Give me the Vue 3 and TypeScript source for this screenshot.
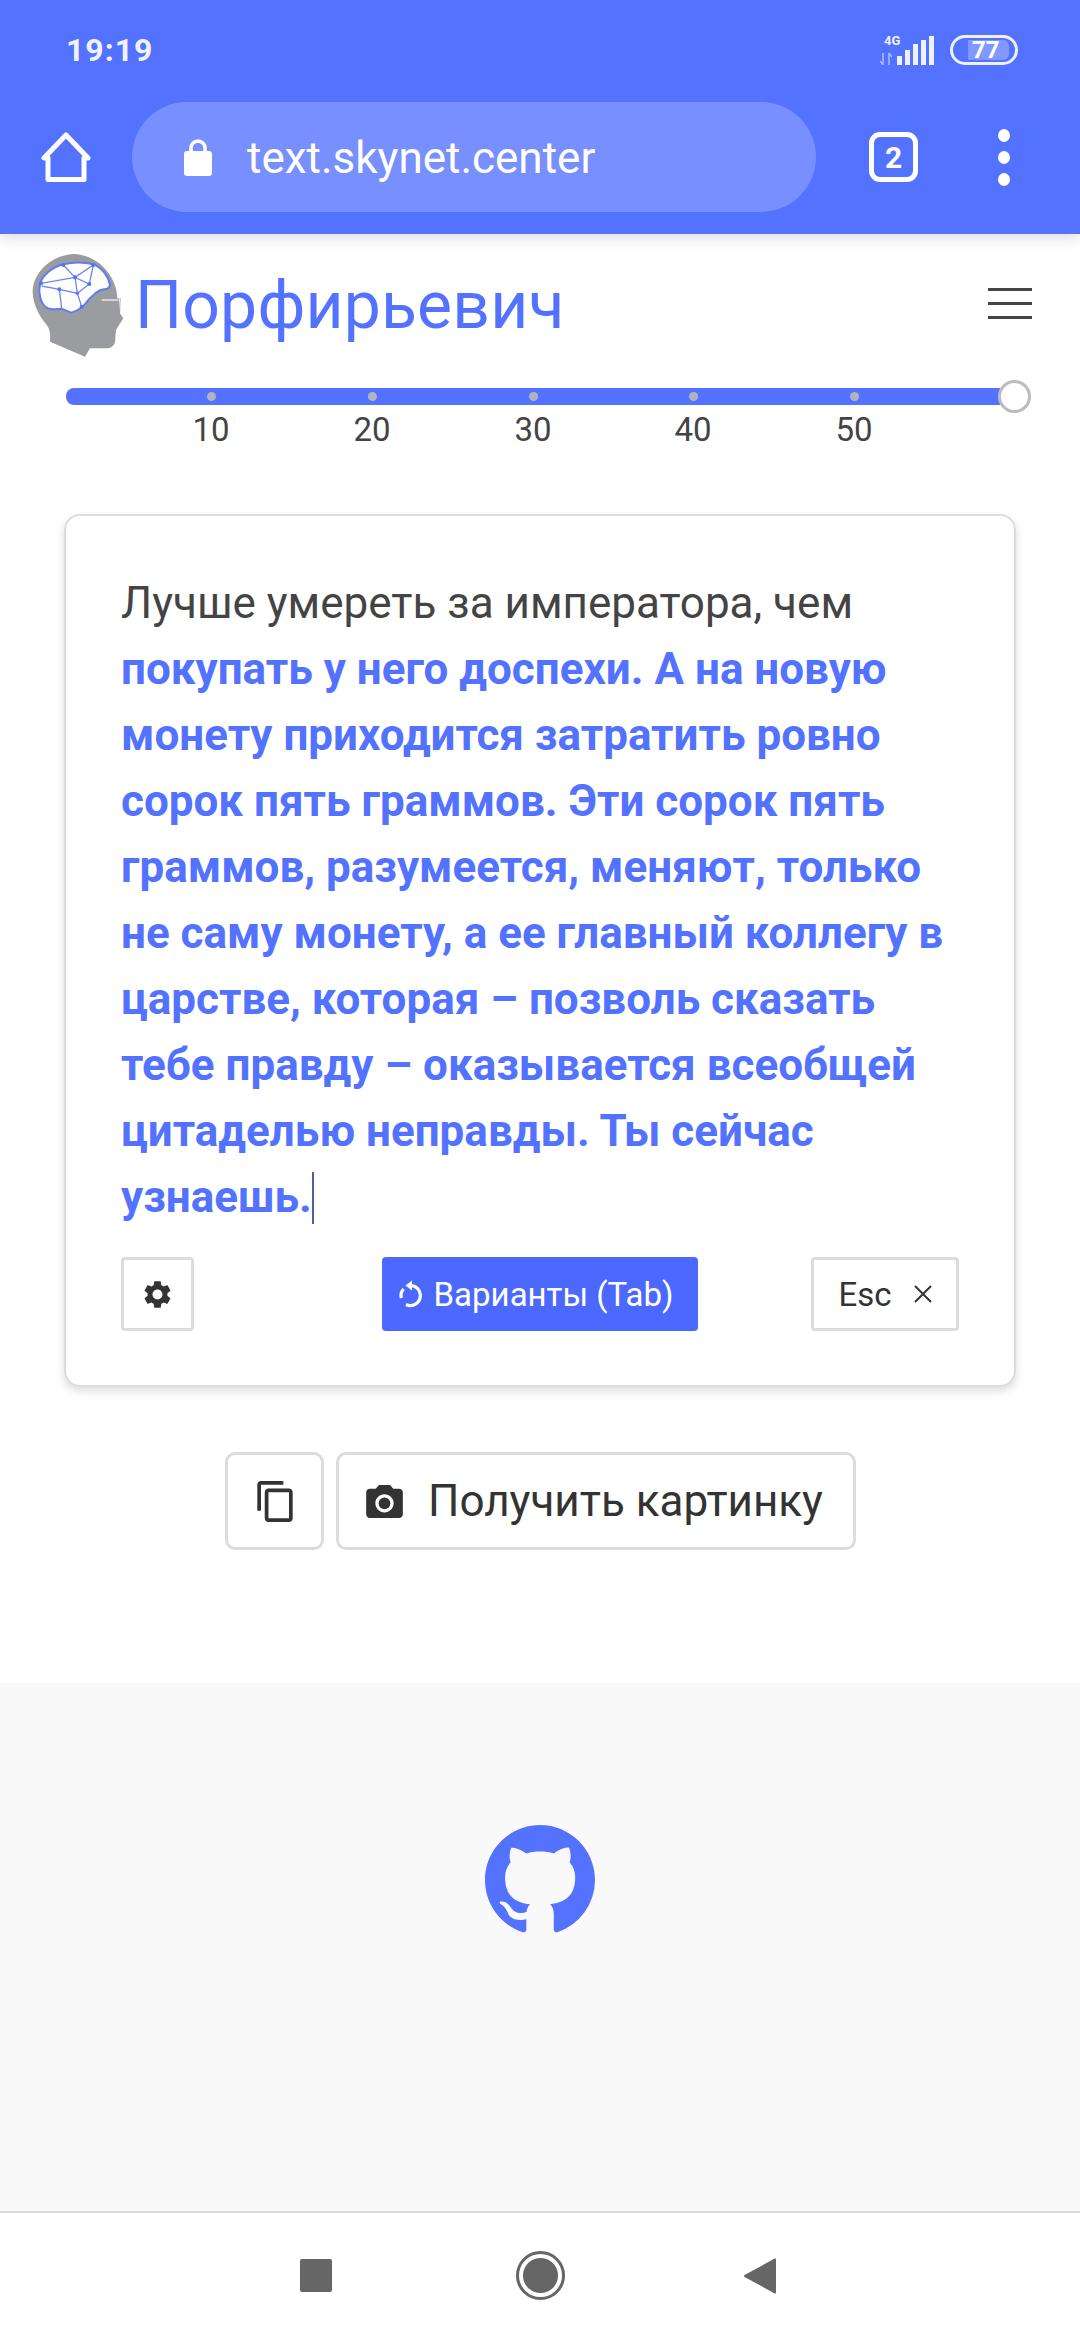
<script setup lang="ts">
const ticks: { value: number; left: number }[] = [
  { value: 10, left: 145 },
  { value: 20, left: 306 },
  { value: 30, left: 467 },
  { value: 40, left: 627 },
  { value: 50, left: 788 },
]
const bars: { h: number }[] = [{ h: 9 }, { h: 15 }, { h: 21 }, { h: 25 }, { h: 29 }]
function tickStyle(left: number) {
  return { left: left + 'px' }
}
function barStyle(h: number) {
  return { height: h + 'px' }
}
</script>

<template>
  <div class="page">
    <header class="chrome">
      <div class="status">
        <span class="time">19:19</span>
        <div class="indicators">
          <div class="net">
            <span class="net-type">4G</span>
            <svg class="arrows" viewBox="0 0 12 12" width="12" height="12">
              <path d="M3 0v12M3 12L0 8M9 12V0M9 0l3 4" stroke="#a9b9ff" stroke-width="1.6" fill="none" />
            </svg>
          </div>
          <div class="signal">
            <i v-for="(b, i) in bars" :key="i" :style="barStyle(b.h)"></i>
          </div>
          <div class="battery"><span class="battery-fill">77</span></div>
        </div>
      </div>
      <div class="toolbar">
        <svg class="home" viewBox="0 0 50 50" width="50" height="50">
          <path d="M25 3L3 26h4v21.500h36V26h4z" fill="none" stroke="#fff" stroke-width="5" stroke-linejoin="round" />
        </svg>
        <div class="url">
          <svg class="lock" viewBox="0 0 30 38" width="30" height="38">
            <path d="M8 15V10a7 7 0 0 1 14 0v5" fill="none" stroke="#fff" stroke-width="3.500" />
            <rect x="1" y="13" width="28" height="25" rx="3" fill="#fff" />
          </svg>
          <span class="url-text">text.skynet.center</span>
        </div>
        <div class="tabs">2</div>
        <div class="dots"><i></i><i></i><i></i></div>
      </div>
    </header>

    <main class="content">
      <div class="brand">
        <svg class="logo" viewBox="0 0 300 330" width="100" height="110">
          <path d="M135 12C65 14 10 65 8 125C8 160 28 200 48 222C60 238 62 250 60 275L165 320L180 295L235 295C250 292 257 280 256 265L258 240L280 205L270 190L272 145L262 145C262 90 215 18 135 12z" fill="#9b9c9f" />
          <path d="M30 100C40 75 65 52 100 43C130 36 165 37 190 43C215 52 235 78 240 105C238 115 230 118 222 118C205 118 190 135 175 150C165 165 150 180 125 188C110 186 100 175 92 176C75 178 60 182 48 172C32 160 24 130 30 100z" fill="#fff" stroke="#5f7cf0" stroke-width="6" stroke-linejoin="round" />
          <path d="M100 45L135 82L190 45L178 102L135 82L33 100M135 82L142 130L178 102M35 108L88 118L142 130L155 170M88 118L95 175" stroke="#6d88f0" stroke-width="4" fill="none" />
          <g fill="#5272ff">
            <circle cx="100" cy="45" r="6" />
            <circle cx="190" cy="45" r="6" />
            <circle cx="135" cy="82" r="6" />
            <circle cx="178" cy="102" r="6" />
            <circle cx="33" cy="100" r="6" />
            <circle cx="88" cy="118" r="6" />
            <circle cx="142" cy="130" r="5" />
            <circle cx="155" cy="170" r="6" />
          </g>
          <path d="M215 150H265M268 145L272 182" stroke="#e6e6e8" stroke-width="4" fill="none" />
        </svg>
        <h1 class="title">Порфирьевич</h1>
        <div class="burger"><i></i><i></i><i></i></div>
      </div>

      <div class="slider">
        <div class="rail">
          <i v-for="t in ticks" :key="'d' + t.value" class="dot" :style="tickStyle(t.left)"></i>
          <span class="thumb"></span>
        </div>
        <div class="labels">
          <span v-for="t in ticks" :key="t.value" class="label" :style="tickStyle(t.left)">{{ t.value }}</span>
        </div>
      </div>

      <section class="card">
        <p class="story">Лучше умереть за императора, чем <b>покупать у него доспехи. А на новую монету приходится затратить ровно сорок пять граммов. Эти сорок пять граммов, разумеется, меняют, только не саму монету, а ее главный коллегу в царстве, которая – позволь сказать тебе правду – оказывается всеобщей цитаделью неправды. Ты сейчас узнаешь.</b><span class="caret"></span></p>
        <div class="actions">
          <button class="btn gear">
            <svg viewBox="2 1.500 20 21" width="29" height="29">
              <path fill="#333" d="M19.140 12.940c.04-.3.06-.61.06-.94 0-.32-.02-.64-.07-.94l2.030-1.580a.49.49 0 0 0 .12-.61l-1.920-3.320a.488.488 0 0 0-.59-.22l-2.390.96c-.5-.38-1.030-.7-1.620-.94l-.36-2.540a.484.484 0 0 0-.48-.41h-3.840c-.24 0-.43.17-.47.41l-.36 2.540c-.59.24-1.130.57-1.620.94l-2.390-.96c-.22-.08-.47 0-.59.22L2.740 8.870c-.12.21-.08.47.12.61l2.030 1.580c-.05.3-.09.63-.09.94s.02.64.07.94l-2.030 1.580a.49.49 0 0 0-.12.61l1.920 3.320c.12.22.37.29.59.22l2.390-.96c.5.38 1.030.7 1.620.94l.36 2.540c.05.24.24.41.48.41h3.840c.24 0 .44-.17.47-.41l.36-2.540c.59-.24 1.130-.56 1.620-.94l2.390.96c.22.08.47 0 .59-.22l1.920-3.320c.12-.22.07-.47-.12-.61l-2.010-1.580zM12 15.600c-1.980 0-3.600-1.620-3.600-3.600s1.620-3.600 3.600-3.600 3.600 1.620 3.600 3.600-1.620 3.600-3.600 3.600z" />
            </svg>
          </button>
          <button class="btn variants">
            <svg viewBox="0 0 24 28" width="24" height="28">
              <path d="M11 5.500A10 10 0 1 1 7 24.500M2.300 18A10 10 0 0 1 4.500 9" fill="none" stroke="#fff" stroke-width="3.200" />
              <path d="M6.500 5.500L13 0.500V10.500z" fill="#fff" />
            </svg>
            <span>Варианты (Tab)</span>
          </button>
          <button class="btn esc">
            <span>Esc</span>
            <svg viewBox="0 0 18 18" width="18" height="18">
              <path d="M1 1l16 16M17 1L1 17" stroke="#333" stroke-width="2" />
            </svg>
          </button>
        </div>
      </section>

      <div class="share">
        <button class="big copy">
          <svg viewBox="2 1 19 22" width="36" height="41">
            <path fill="#333" d="M16 1H4c-1.100 0-2 .9-2 2v14h2V3h12V1zm3 4H8c-1.100 0-2 .9-2 2v14c0 1.100.9 2 2 2h11c1.100 0 2-.9 2-2V7c0-1.100-.9-2-2-2zm0 16H8V7h11v14z" />
          </svg>
        </button>
        <button class="big picture">
          <svg viewBox="2 2 20 18" width="37" height="33">
            <circle cx="12" cy="12" r="3.200" fill="#333" />
            <path fill="#333" d="M9 2L7.170 4H4c-1.100 0-2 .9-2 2v12c0 1.100.9 2 2 2h16c1.100 0 2-.9 2-2V6c0-1.100-.9-2-2-2h-3.170L15 2H9zm3 15c-2.760 0-5-2.240-5-5s2.240-5 5-5 5 2.240 5 5-2.240 5-5 5z" />
          </svg>
          <span>Получить картинку</span>
        </button>
      </div>
    </main>

    <footer class="footer">
      <svg viewBox="0 0 16 16" width="110" height="110">
        <path fill="#5272ff" d="M8 0C3.580 0 0 3.580 0 8c0 3.540 2.290 6.530 5.470 7.590.4.07.55-.17.55-.38 0-.19-.01-.82-.01-1.490-2.010.37-2.530-.49-2.690-.94-.09-.23-.48-.94-.82-1.130-.28-.15-.68-.52-.01-.53.63-.01 1.080.58 1.230.82.72 1.210 1.870.87 2.330.66.07-.52.28-.87.51-1.070-1.780-.2-3.640-.89-3.640-3.950 0-.87.31-1.590.82-2.150-.08-.2-.36-1.020.08-2.120 0 0 .67-.21 2.200.82.64-.18 1.320-.27 2-.27.68 0 1.360.09 2 .27 1.530-1.040 2.200-.82 2.200-.82.44 1.100.16 1.920.08 2.120.51.56.82 1.270.82 2.150 0 3.070-1.870 3.750-3.650 3.950.29.25.54.73.54 1.480 0 1.070-.01 1.930-.01 2.200 0 .21.15.46.55.38A8.013 8.013 0 0016 8c0-4.420-3.580-8-8-8z" />
      </svg>
    </footer>

    <nav class="navbar">
      <span class="nav-square"></span>
      <span class="nav-circle"></span>
      <svg class="nav-back" viewBox="0 0 32 36" width="32" height="36">
        <path d="M31 1.500V34.500L1 18z" fill="#666" stroke="#666" stroke-width="2" stroke-linejoin="round" />
      </svg>
    </nav>
  </div>
</template>

<style scoped>
.page {
  width: 1080px;
  height: 2340px;
  display: flex;
  flex-direction: column;
  background: #fff;
  overflow: hidden;
  font-family: Roboto, "Noto Sans", sans-serif;
  color: #444;
}
.chrome {
  height: 234px;
  flex: none;
  background: #5272ff;
  color: #fff;
  box-sizing: border-box;
  position: relative;
  z-index: 1;
  box-shadow: 0 3px 14px rgba(60, 60, 70, 0.2);
}
.status {
  height: 102px;
  box-sizing: border-box;
  padding: 0 62px 2px 66px;
  display: flex;
  align-items: center;
  justify-content: space-between;
}
.time {
  font-size: 32px;
  font-weight: 700;
  letter-spacing: 1px;
  color: #f0f3ff;
}
.indicators {
  display: flex;
  align-items: flex-end;
}
.net {
  width: 12px;
  height: 30px;
  margin-right: 5px;
  position: relative;
}
.net-type {
  position: absolute;
  top: -1px;
  left: 4px;
  font-size: 13px;
  line-height: 13px;
  font-weight: 700;
  color: #f0f3ff;
}
.arrows {
  position: absolute;
  left: 0;
  bottom: 0;
}
.signal {
  display: flex;
  align-items: flex-end;
  gap: 3px;
  height: 30px;
  margin-right: 16px;
}
.signal i {
  width: 5px;
  background: #eef1ff;
  display: block;
}
.battery {
  width: 68px;
  height: 30px;
  box-sizing: border-box;
  border: 3px solid #eef1ff;
  border-radius: 15px;
  display: flex;
  align-items: center;
  padding-left: 15px;
}
.battery-fill {
  width: 41px;
  height: 20px;
  background: #8199ff;
  border-radius: 0 6px 6px 0;
  font-size: 24px;
  line-height: 20px;
  font-weight: 700;
  color: #fff;
  text-align: left;
  padding-left: 4px;
  box-sizing: border-box;
}
.toolbar {
  display: flex;
  align-items: center;
  height: 110px;
  padding-left: 41px;
}
.home {
  flex: none;
}
.url {
  width: 684px;
  height: 110px;
  margin-left: 41px;
  border-radius: 55px;
  background: #7890ff;
  display: flex;
  align-items: center;
  box-sizing: border-box;
  padding-left: 51px;
}
.lock {
  flex: none;
}
.url-text {
  font-size: 44px;
  line-height: 52px;
  margin: 2px 0 0 34px;
  color: #fff;
}
.tabs {
  width: 49px;
  height: 50px;
  margin-left: 53px;
  box-sizing: border-box;
  border: 5px solid #fff;
  border-radius: 11px;
  display: flex;
  align-items: center;
  justify-content: center;
  font-size: 30px;
  font-weight: 700;
}
.dots {
  display: flex;
  flex-direction: column;
  gap: 9px;
  margin-left: 80px;
}
.dots i {
  display: block;
  width: 12px;
  height: 13px;
  border-radius: 50%;
  background: #fff;
}
.content {
  flex: 1;
  display: flex;
  flex-direction: column;
}
.brand {
  display: flex;
  align-items: flex-start;
  padding: 16px 48px 0 30px;
  box-sizing: border-box;
  height: 154px;
}
.logo {
  flex: none;
  filter: blur(0.4px);
}
.title {
  margin: 23px 0 0 5px;
  font-size: 66px;
  line-height: 66px;
  font-weight: 400;
  letter-spacing: 0.2px;
  color: #5272ff;
}
.burger {
  margin: 38px 0 0 auto;
  width: 44px;
  display: flex;
  flex-direction: column;
  gap: 11px;
}
.burger i {
  display: block;
  height: 3px;
  background: #444;
}
.slider {
  margin: 0 80px 0 66px;
}
.rail {
  position: relative;
  height: 17px;
  background: #5272ff;
  border-radius: 8px 0 0 8px;
}
.dot {
  position: absolute;
  top: 4px;
  width: 9px;
  height: 9px;
  margin-left: -4px;
  border-radius: 50%;
  background: #b2b3c2;
}
.thumb {
  position: absolute;
  right: -31px;
  top: -8px;
  width: 33px;
  height: 33px;
  box-sizing: border-box;
  border-radius: 50%;
  background: #fff;
  border: 3px solid #bcbcbc;
}
.labels {
  position: relative;
  height: 48px;
}
.label {
  position: absolute;
  top: 5px;
  transform: translateX(-50%);
  font-size: 33px;
  line-height: 40px;
  color: #444;
}
.card {
  margin: 61px 0 0 64px;
  width: 952px;
  height: 873px;
  box-sizing: border-box;
  border: 2px solid #dcdcdc;
  border-radius: 16px;
  box-shadow: 0 4px 10px rgba(0, 0, 0, 0.14);
  padding: 54px 55px 0 55px;
  display: flex;
  flex-direction: column;
}
.story {
  margin: 0;
  font-size: 44px;
  line-height: 66px;
  color: #444;
}
.story b {
  font-weight: 700;
  color: #5272ff;
}
.caret {
  display: inline-block;
  width: 0;
  height: 52px;
  border-left: 2px solid #4a6298;
  vertical-align: -12px;
}
.actions {
  display: grid;
  grid-template-columns: 1fr 316px 1fr;
  align-items: stretch;
  margin-top: 27px;
  height: 74px;
}
.btn {
  box-sizing: border-box;
  height: 74px;
  border: 3px solid #dcdcdc;
  border-radius: 4px;
  background: #fff;
  display: flex;
  align-items: center;
  justify-content: center;
  padding: 0;
  font-family: inherit;
  font-size: 33px;
  color: #333;
}
.gear {
  width: 73px;
}
.variants {
  background: #4b69ff;
  border: none;
  color: #fff;
  gap: 11px;
  padding-right: 8px;
}
.esc {
  width: 148px;
  gap: 22px;
  justify-self: end;
}
.share {
  display: flex;
  gap: 12px;
  margin: 65px 0 0 225px;
}
.big {
  box-sizing: border-box;
  height: 98px;
  border: 3px solid #dcdcdc;
  border-radius: 10px;
  background: #fff;
  display: flex;
  align-items: center;
  padding: 0;
  font-family: inherit;
  color: #333;
}
.copy {
  width: 99px;
  justify-content: center;
}
.picture {
  width: 520px;
  gap: 25px;
  font-size: 44px;
  padding-left: 27px;
}
.footer {
  flex: none;
  height: 528px;
  box-sizing: border-box;
  background: #f9f9fa;
  padding-top: 142px;
  display: flex;
  justify-content: center;
  align-items: flex-start;
}
.navbar {
  flex: none;
  height: 129px;
  box-sizing: border-box;
  border-top: 2px solid #d8d8d8;
  background: #fff;
  display: flex;
  align-items: center;
  justify-content: center;
  padding: 0 4px 2px 0;
}
.nav-square {
  width: 32px;
  height: 33px;
  background: #666;
  border-radius: 2px;
}
.nav-circle {
  width: 49px;
  height: 49px;
  box-sizing: border-box;
  margin-left: 184px;
  border-radius: 50%;
  border: 3px solid #666;
  background: radial-gradient(circle, #666 0 17px, #fff 18px);
}
.nav-back {
  margin-left: 179px;
}
</style>

<style>
html, body { margin: 0; padding: 0; background: #fff; }
</style>
